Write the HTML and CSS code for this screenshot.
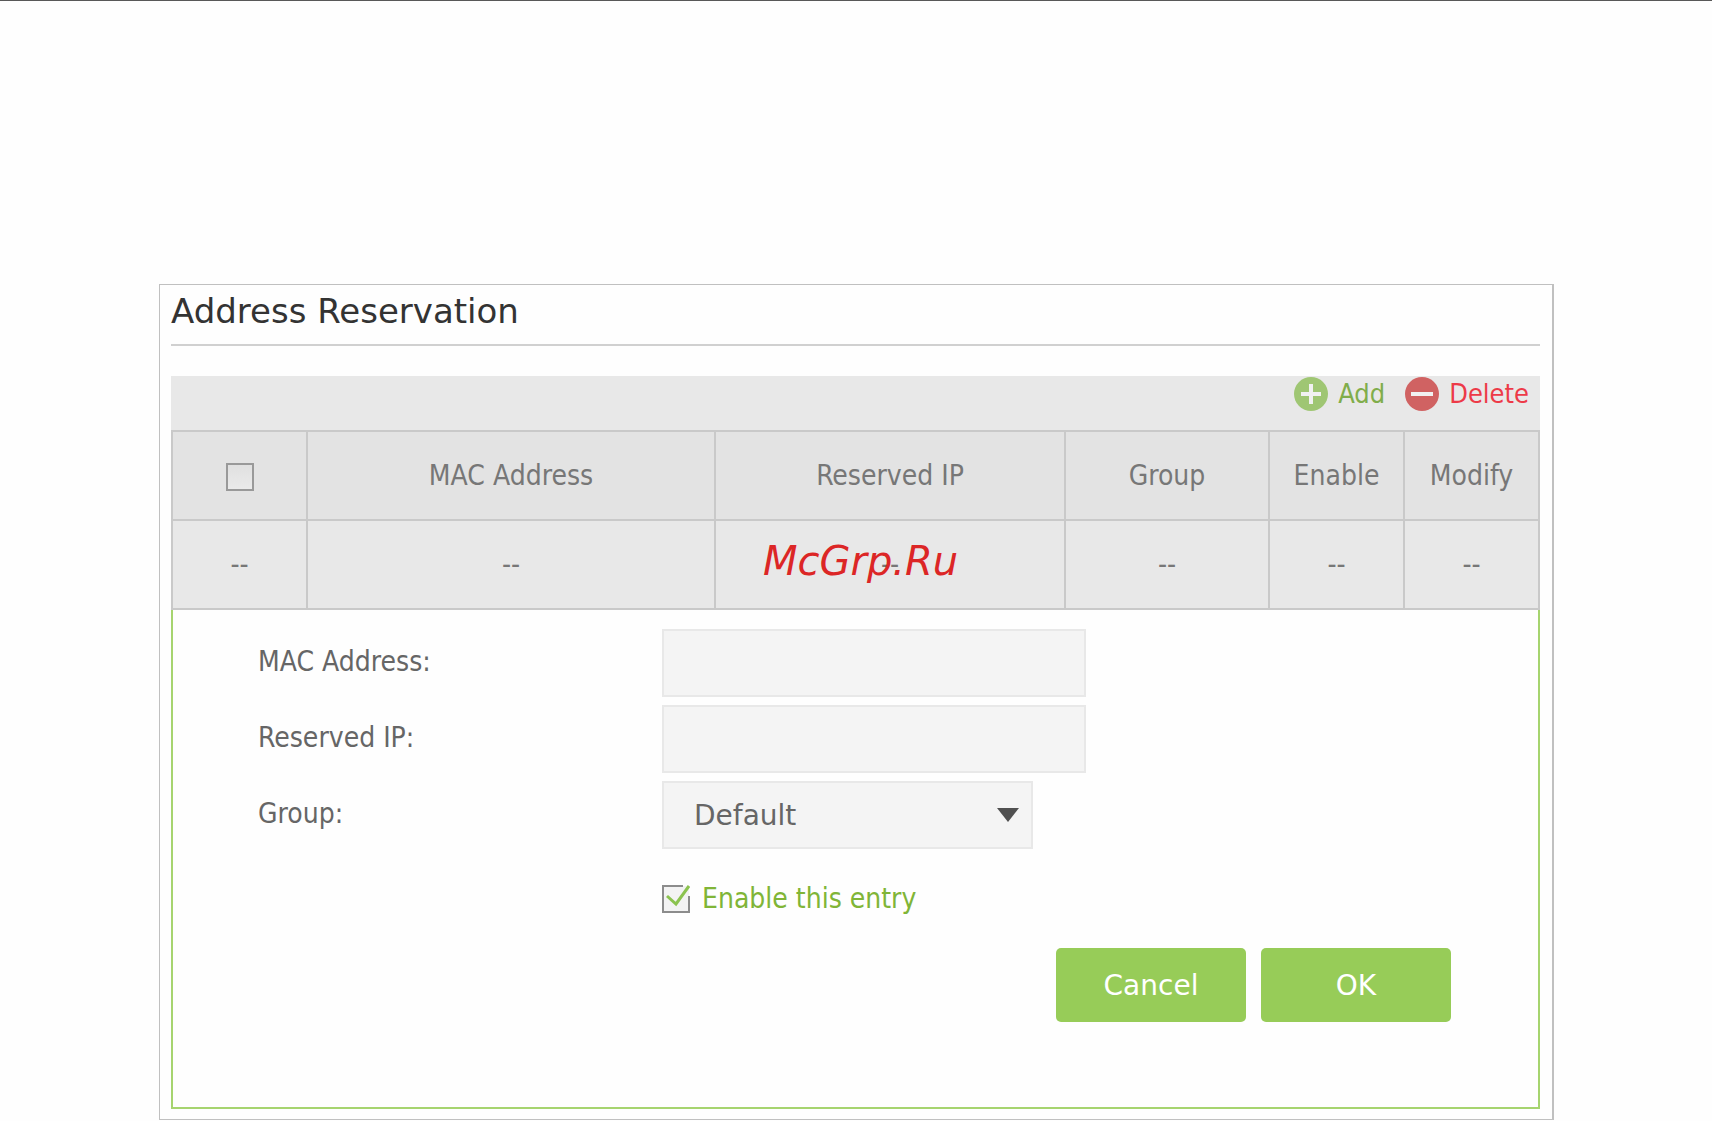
FILE: index.html
```
<!DOCTYPE html>
<html lang="en">
<head>
  <meta charset="UTF-8" />
  <meta name="viewport" content="width=device-width, initial-scale=1.0" />
  <title>Address Reservation</title>
  <link rel="stylesheet" href="styles.css">
</head>
<body>
  <main class="panel">
    <h1>Address Reservation</h1>

    <div class="toolbar">
      <button type="button" class="tool add">
        <svg viewBox="0 0 34 34" aria-hidden="true">
          <circle cx="17" cy="17" r="17" fill="#9fc673"/>
          <path d="M17 7v20M7 17h20" stroke="#f1f1f1" stroke-width="4"/>
        </svg>
        Add
      </button>
      <button type="button" class="tool delete">
        <svg viewBox="0 0 34 34" aria-hidden="true">
          <circle cx="17" cy="17" r="17" fill="#d06262"/>
          <path d="M6 17h22" stroke="#f1f1f1" stroke-width="4"/>
        </svg>
        Delete
      </button>
    </div>

    <table class="list">
      <colgroup>
        <col class="col-small">
        <col>
        <col class="col-ip">
        <col class="col-group">
        <col class="col-small">
        <col class="col-small">
      </colgroup>
      <thead>
        <tr>
          <th><input type="checkbox" class="check" aria-label="Select all"></th>
          <th>MAC Address</th>
          <th>Reserved IP</th>
          <th>Group</th>
          <th>Enable</th>
          <th>Modify</th>
        </tr>
      </thead>
      <tbody>
        <tr>
          <td>--</td>
          <td>--</td>
          <td class="marked">--<span class="watermark">McGrp.Ru</span></td>
          <td>--</td>
          <td>--</td>
          <td>--</td>
        </tr>
      </tbody>
    </table>

    <form class="editor">
      <div class="row">
        <label for="mac">MAC Address:</label>
        <input type="text" id="mac" class="field">
      </div>
      <div class="row">
        <label for="ip">Reserved IP:</label>
        <input type="text" id="ip" class="field">
      </div>
      <div class="row">
        <label for="group">Group:</label>
        <select id="group" class="field">
          <option>Default</option>
        </select>
      </div>
      <div class="enable">
        <input type="checkbox" id="enable" class="check" checked>
        <label for="enable">Enable this entry</label>
      </div>
      <div class="actions">
        <button type="button">Cancel</button>
        <button type="button">OK</button>
      </div>
    </form>
  </main>
</body>
</html>
```
FILE: styles.css
```
* {
  box-sizing: border-box;
}
body {
  margin: 0;
  padding: 283px 158px 0 159px;
  border-top: 1px solid #585858;
  background: #fefefe;
  color: #666;
  font-family: "DejaVu Sans Condensed", "Noto Sans", sans-serif;
  font-size: 28px;
  line-height: 32px;
}
.panel {
  padding: 0 12px 10px 11px;
  border: 1px solid #c0c0c0;
  border-right-width: 2px;
}
h1 {
  margin: 0 0 30px;
  padding: 6px 0 13px;
  border-bottom: 2px solid #d0d0d0;
  color: #333;
  font-family: "DejaVu Sans", sans-serif;
  font-size: 34px;
  font-weight: 400;
  line-height: 40px;
}
.toolbar {
  display: flex;
  justify-content: flex-end;
  gap: 20px;
  height: 54px;
  padding: 1px 11px 0 0;
  background: #e8e8e8;
}
.tool {
  display: flex;
  align-items: center;
  gap: 10px;
  height: 34px;
  padding: 0;
  border: none;
  background: none;
  font: inherit;
  font-size: 27px;
  cursor: pointer;
}
.tool svg {
  width: 34px;
  height: 34px;
}
.add {
  color: #80ad4b;
}
.delete {
  color: #ed3a48;
}
.list {
  width: 100%;
  border-collapse: collapse;
  table-layout: fixed;
}
.col-small {
  width: 135px;
}
.col-ip {
  width: 350px;
}
.col-group {
  width: 204px;
}
.list th,
.list td {
  height: 89px;
  padding: 0;
  border: 2px solid #c9c9c9;
  background: #e3e3e3;
  color: #777;
  font-weight: 400;
  text-align: center;
  vertical-align: middle;
}
.list td {
  background: #e8e8e8;
}
.marked {
  position: relative;
}
.watermark {
  position: absolute;
  top: 16px;
  left: 47px;
  color: #dc2626;
  font-family: "DejaVu Sans", sans-serif;
  font-size: 40px;
  font-style: italic;
  line-height: 48px;
}
.check {
  appearance: none;
  display: inline-block;
  width: 28px;
  height: 28px;
  margin: 0;
  border: 2px solid #999;
  background: linear-gradient(#e0e0e0, #eaeaea);
  vertical-align: middle;
}
.check:checked {
  border: none;
  background: url("data:image/svg+xml,%3Csvg xmlns='http://www.w3.org/2000/svg' viewBox='0 0 28 28'%3E%3Cpath d='M1 1h26v26H1z' fill='%23f3f3f3'/%3E%3Cpath d='M21 1H1v26h26V11' fill='none' stroke='%238c8c8c' stroke-width='2'/%3E%3Cpath d='M5 11l9 8L27 1' fill='none' stroke='%238bc34f' stroke-width='3'/%3E%3C/svg%3E") center / 100% 100%;
}
.editor {
  padding: 19px 87px 85px 85px;
  border: 2px solid #a6d46f;
  border-top: none;
}
.row {
  display: grid;
  grid-template-columns: 404px 1fr;
  align-items: center;
  margin-bottom: 8px;
}
.row label {
  padding-bottom: 2px;
}
.field {
  width: 424px;
  height: 68px;
  padding: 0 30px;
  border: 2px solid #e8e8e8;
  border-radius: 0;
  background: #f4f4f4;
  color: #666;
  font-family: "DejaVu Sans", sans-serif;
  font-size: 28px;
}
select.field {
  appearance: none;
  width: 371px;
  background: #f4f4f4 url("data:image/svg+xml,%3Csvg xmlns='http://www.w3.org/2000/svg' viewBox='0 0 22 14'%3E%3Cpath d='M0 0h22L11 14z' fill='%23505050'/%3E%3C/svg%3E") right 12px center / 22px 14px no-repeat;
}
.enable {
  display: flex;
  align-items: center;
  gap: 12px;
  margin: 34px 0 33px 404px;
  color: #80b537;
}
.actions {
  display: flex;
  justify-content: flex-end;
  gap: 15px;
}
.actions button {
  width: 190px;
  height: 74px;
  border: none;
  border-radius: 5px;
  background: #97cc58;
  color: #fff;
  font-family: "DejaVu Sans", sans-serif;
  font-size: 28px;
  cursor: pointer;
}
```
